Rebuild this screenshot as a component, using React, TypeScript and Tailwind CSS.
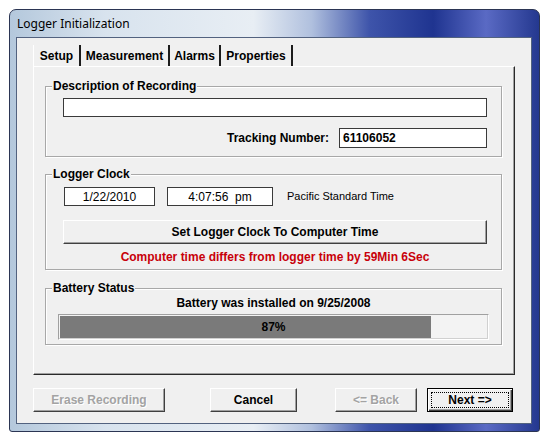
import type { ReactNode } from "react";

const ui = { fontFamily: '"Liberation Sans", Arial, sans-serif' };

const tabs = [
  { label: "Setup", w: "w-[47px]" },
  { label: "Measurement", w: "w-[89px]" },
  { label: "Alarms", w: "w-[51px]" },
  { label: "Properties", w: "w-[72px]" },
];

function Group({ title, className, children }: { title: string; className?: string; children: ReactNode }) {
  return (
    <fieldset
      className={`ml-[11px] mr-[12px] border border-[#a8a8a8] p-0 shadow-[1px_1px_0_#ffffff,inset_1px_1px_0_#ffffff] ${className ?? ""}`}
    >
      <legend className="ml-[6px] bg-[#f0f0f0] px-[1px] text-[12px] font-bold leading-[14px] text-black">{title}</legend>
      {children}
    </fieldset>
  );
}

function Field({ value, className, bold }: { value: string; className?: string; bold?: boolean }) {
  return (
    <div
      className={`flex h-[19px] items-center border border-[#3a3a3a] bg-white text-[12px] text-black ${bold ? "font-bold" : ""} ${className ?? ""}`}
    >
      {value}
    </div>
  );
}

function Btn({ label, disabled, className }: { label: string; disabled?: boolean; className?: string }) {
  return (
    <div
      className={`flex h-[24px] items-center justify-center border border-t-white border-l-white border-r-[#404040] border-b-[#404040] bg-[#f0f0f0] text-[12px] font-bold shadow-[inset_-1px_-1px_0_#a0a0a0] ${
        disabled ? "text-[#a3a3a3] [text-shadow:1px_1px_0_#ffffff]" : "text-black"
      } ${className ?? ""}`}
    >
      {label}
    </div>
  );
}

export default function App() {
  return (
    <div className="h-[441px] w-[548px] overflow-hidden bg-white pl-[9px] pt-[9px]" style={ui}>
      <div className="flex h-[423px] w-[531px] flex-col rounded-t-[7px] rounded-b-[3px] border border-[#2b3553] bg-[linear-gradient(90deg,#b4c8dc_0%,#d8e3ee_18%,#e8eef4_46%,#b0c0de_57%,#3e54aa_68%,#1f3490_80%,#5a6ac4_90%,#24388f_100%)] pb-[7px] pl-[6px] pr-[7px]">
        <div className="flex h-[27px] items-center pl-[1px] text-[12px] text-black" style={{ fontFamily: '"Noto Sans", sans-serif' }}>
          Logger Initialization
        </div>

        <div className="flex flex-1 flex-col border border-[#52627f] bg-[#f0f0f0] px-[16px] pt-[7px]">
          {/* tab strip */}
          <div className="flex h-[21px] items-stretch border-l border-white">
            {tabs.map((t) => (
              <div
                key={t.label}
                className={`flex items-center justify-center border-r-2 border-[#1c1c1c] text-[12px] font-bold text-black ${t.w}`}
              >
                {t.label}
              </div>
            ))}
          </div>

          {/* tab page */}
          <div className="flex h-[309px] flex-col border border-t-white border-l-white border-r-[#2a2a2a] border-b-[#2a2a2a] shadow-[inset_-1px_-1px_0_#a0a0a0]">
            <Group title="Description of Recording" className="mt-[12px] pb-[8px]">
              <div className="pl-[17px] pr-[14px]">
                <Field value="" className="mt-[5px]" />
                <div className="mt-[11px] flex items-center justify-end gap-[10px]">
                  <span className="text-[12px] font-bold">Tracking Number:</span>
                  <Field value="61106052" bold className="h-[20px] w-[148px] pl-[3px]" />
                </div>
              </div>
            </Group>

            <Group title="Logger Clock" className="mt-[10px] pb-[5px]">
              <div className="pl-[17px] pr-[14px]">
                <div className="mt-[6px] flex items-center">
                  <Field value="1/22/2010" className="ml-[1px] w-[91px] justify-center" />
                  <Field value="4:07:56  pm" className="ml-[12px] w-[106px] justify-center whitespace-pre" />
                  <span className="ml-[14px] text-[11px]">Pacific Standard Time</span>
                </div>
                <Btn label="Set Logger Clock To Computer Time" className="mt-[14px] h-[21px]" />
                <div className="mt-[6px] text-center text-[12px] font-bold leading-[14px] text-[#c8000a]">
                  Computer time differs from logger time by 59Min 6Sec
                </div>
              </div>
            </Group>

            <Group title="Battery Status" className="mt-[11px] pb-[4px]">
              <div className="mt-[1px] text-center text-[12px] font-bold leading-[14px]">Battery was installed on 9/25/2008</div>
              <div className="relative mx-[12px] mt-[4px] flex h-[26px] border border-t-[#a0a0a0] border-l-[#a0a0a0] border-r-white border-b-white bg-[#f3f3f3] p-[1px] shadow-[inset_-1px_-1px_0_#d0d0d0]">
                <div className="h-full w-[87%] bg-[#7a7a7a]" />
                <span className="absolute inset-0 flex items-center justify-center text-[12px] font-bold text-black">87%</span>
              </div>
            </Group>
          </div>

          {/* dialog buttons */}
          <div className="mt-[13px] flex">
            <Btn label="Erase Recording" disabled className="w-[132px]" />
            <Btn label="Cancel" className="ml-[45px] w-[87px]" />
            <Btn label="<= Back" disabled className="ml-[38px] w-[82px]" />
            <div className="ml-[10px] flex h-[24px] w-[86px] border border-black bg-[#f0f0f0] p-[3px] shadow-[inset_1px_1px_0_#ffffff,inset_-1px_-1px_0_#404040,inset_-2px_-2px_0_#a0a0a0]">
              <div className="flex flex-1 items-center justify-center border border-dotted border-black text-[12px] font-bold text-black">
                Next =&gt;
              </div>
            </div>
          </div>
        </div>
      </div>
    </div>
  );
}
